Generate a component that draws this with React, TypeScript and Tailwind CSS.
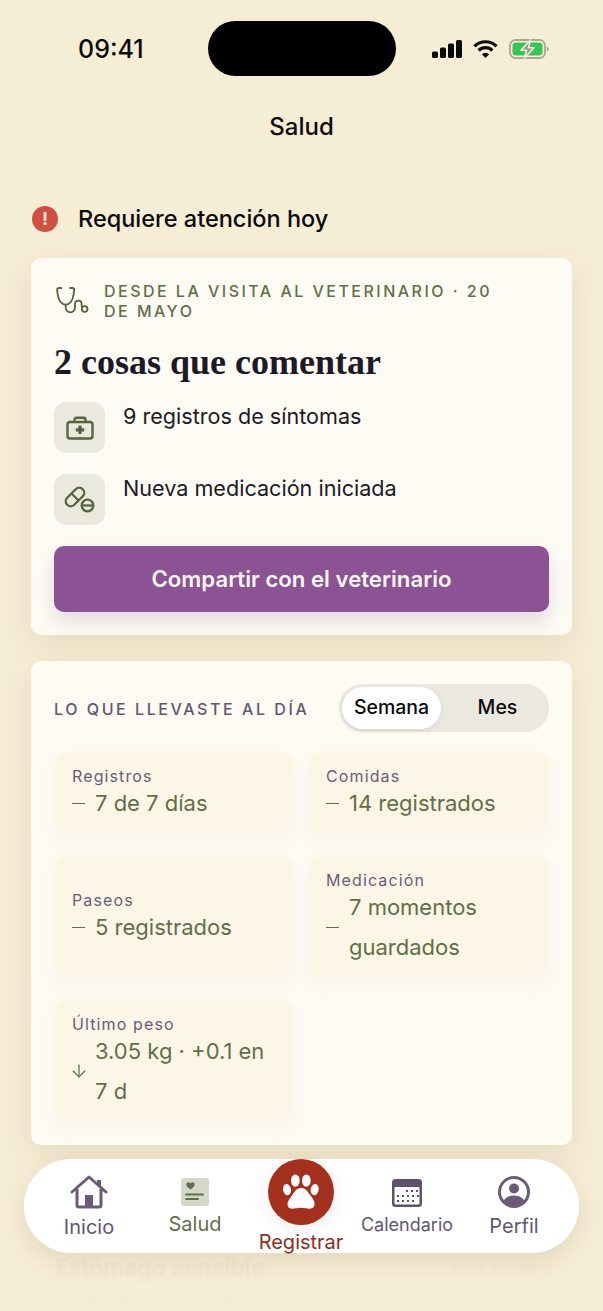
import { ArrowDown } from "lucide-react";

const sans = "font-['Inter','Liberation_Sans',sans-serif]";

function Signal() {
  return (
    <svg width="30" height="18" viewBox="0 0 30 18" fill="#0b0b0b">
      <rect x="0" y="11.500" width="6" height="6.500" rx="1.500" />
      <rect x="8" y="7.500" width="6" height="10.500" rx="1.500" />
      <rect x="16" y="3.500" width="6" height="14.500" rx="1.500" />
      <rect x="24" y="0" width="6" height="18" rx="1.500" />
    </svg>
  );
}

function Wifi() {
  return (
    <svg width="25" height="18" viewBox="0 0 25 18" fill="none" stroke="#0b0b0b" strokeWidth="3.200">
      <path d="M1.500 6.300a15.600 15.600 0 0 1 22 0" />
      <path d="M5.600 10.500a9.800 9.800 0 0 1 13.800 0" />
      <path d="M12.500 18l-3.700-3.800a5.200 5.200 0 0 1 7.400 0z" fill="#0b0b0b" stroke="none" />
    </svg>
  );
}

function Battery() {
  return (
    <svg width="40" height="20" viewBox="0 0 40 20">
      <rect x="1" y="1" width="35" height="18" rx="5.500" fill="#f7f1dc" stroke="#a9a98e" strokeWidth="1.800" />
      <rect x="3.500" y="3.500" width="30" height="13" rx="3.500" fill="#33c758" />
      <path d="M37.800 7.500v5c1.400-.4 2-1.300 2-2.500s-.6-2.100-2-2.500z" fill="#a9a98e" />
      <path d="M21.500 1L12 11.300h5.500L15.500 19l9.500-10.300h-5.500z" fill="#9a9a86" stroke="#f2ecd6" strokeWidth="1.600" strokeLinejoin="round" />
    </svg>
  );
}

function StethoIcon() {
  return (
    <svg className="mt-1 shrink-0" width="36" height="30" viewBox="12 15 108 90" fill="none" stroke="#57643f" strokeWidth="5.500" strokeLinecap="round">
      <path d="M34 24h-7c-4 0-6 3-5.500 7l2 14c2 17 12 29 23.500 29s21.500-12 23.500-29l2-14c.5-4-1.500-7-5.500-7h-7" />
      <path d="M47 74v8c0 9 6 15 14 15s14-6 14-15V72c0-6 4-10 10-10s10 4 10 10v6" />
      <circle cx="104" cy="87" r="8.500" />
    </svg>
  );
}

function MedKit() {
  return (
    <svg width="28" height="24" viewBox="0 0 28 24" fill="none" stroke="#57643f" strokeWidth="2.400">
      <rect x="1.500" y="6" width="25" height="16.500" rx="2.500" />
      <path d="M8.500 6V3.500A1.800 1.800 0 0 1 10.300 1.700h7.400A1.800 1.800 0 0 1 19.500 3.500V6" />
      <path d="M14 9.500v8.500M9.800 13.800h8.400" strokeWidth="3.200" />
    </svg>
  );
}

function PillMinus() {
  return (
    <svg width="31" height="27" viewBox="0 0 31 27" fill="none" stroke="#57643f" strokeWidth="2.300">
      <rect x="-11" y="-5" width="22" height="10" rx="5" transform="translate(11 11) rotate(-45)" />
      <path d="M7.500 7.500l7 7" />
      <circle cx="23.500" cy="19.500" r="5.800" />
      <path d="M18.500 19.500h10" />
    </svg>
  );
}

function HomeIcon() {
  return (
    <svg width="38" height="34" viewBox="0 0 38 34" fill="none">
      <path d="M2 17L19 2l17 15" stroke="#6b5a78" strokeWidth="3" strokeLinecap="round" strokeLinejoin="round" />
      <path d="M29 5v6" stroke="#6b5a78" strokeWidth="4" />
      <path d="M7 14v16a2 2 0 0 0 2 2h20a2 2 0 0 0 2-2V14" stroke="#6b5a78" strokeWidth="3" />
      <rect x="15" y="20" width="8" height="12" fill="#6b5a78" />
    </svg>
  );
}

function HealthIcon() {
  return (
    <svg width="28" height="28" viewBox="0 0 28 28">
      <rect width="28" height="28" rx="3" fill="#d3d8c8" />
      <path d="M9 12.500C6 10.300 4.800 9 4.800 7.300 4.800 5.300 7.600 4.500 9 6.600 10.400 4.500 13.200 5.300 13.200 7.300 13.200 9 12 10.300 9 12.500z" fill="#5f7048" transform="translate(.5 -1)" />
      <path d="M5 16.500h17M5 21h12" stroke="#5f7048" strokeWidth="1.800" strokeLinecap="round" />
    </svg>
  );
}

function Paw() {
  return (
    <svg width="40" height="38" viewBox="49 52 120 114" fill="#fff">
      <ellipse cx="67" cy="102" rx="12" ry="17" transform="rotate(-10 67 102)" />
      <ellipse cx="92" cy="75" rx="13" ry="18.500" />
      <ellipse cx="125" cy="75" rx="13" ry="18.500" />
      <ellipse cx="150" cy="102" rx="12" ry="17" transform="rotate(10 150 102)" />
      <path d="M109 97C124 97 132 112 141 124C149 134 151 142 149 150C146 160 134 160 124 158C114 156 104 156 94 158C84 160 71 160 69 150C67 142 71 133 79 124C87 112 94 97 109 97z" />
    </svg>
  );
}

function CalendarIcon() {
  const dots = [
    [15, 12], [20, 12], [25, 12],
    [6, 17], [11, 17], [16, 17], [21, 17], [26, 17],
    [6, 22], [11, 22], [16, 22], [21, 22],
  ];
  return (
    <svg width="30" height="28" viewBox="0 0 30 28">
      <rect x="0" y="0" width="30" height="28" rx="3.500" fill="#5f5169" />
      <rect x="2.500" y="8" width="25" height="17.500" rx="1" fill="#fff" />
      {dots.map(([x, y]) => (
        <rect key={`${x}-${y}`} x={x - 1} y={y - 1} width="2" height="2" fill="#5f5169" />
      ))}
    </svg>
  );
}

function ProfileIcon() {
  return (
    <svg width="32" height="32" viewBox="0 0 32 32">
      <defs>
        <clipPath id="profile-clip">
          <circle cx="16" cy="16" r="13.500" />
        </clipPath>
      </defs>
      <circle cx="16" cy="16" r="14.500" fill="none" stroke="#6b5a78" strokeWidth="3" />
      <circle cx="16" cy="12.500" r="5" fill="#6b5a78" />
      <ellipse cx="16" cy="27" rx="11" ry="7.500" fill="#6b5a78" clipPath="url(#profile-clip)" />
    </svg>
  );
}

function Row({ icon, text }: { icon: React.ReactNode; text: string }) {
  return (
    <div className="flex gap-[18px]">
      <div className="flex h-[51px] w-[51px] shrink-0 items-center justify-center rounded-xl bg-[#e9e9dd]">{icon}</div>
      <p className="text-[21.600px] leading-[28px] text-[#1d1a26]">{text}</p>
    </div>
  );
}

function Tile({ label, mark, value }: { label: string; mark?: React.ReactNode; value: string }) {
  return (
    <div className="flex flex-col justify-center rounded-xl bg-[#fcf6e7] pb-2.5 pl-[17px] pr-4 pt-3.5 shadow-[0_8px_20px_rgba(120,100,60,0.05)]">
      <p className="h-5 text-[16px] leading-5 tracking-[0.07em] text-[#6a5d78]">{label}</p>
      <div className="-mt-[3px] flex items-center gap-2 text-[22px] leading-10 text-[#5f7048]">
        <span className="flex w-[15px] shrink-0 items-center justify-start">
          {mark ?? <span className="h-px w-[13px] bg-[#5f7048]" />}
        </span>
        <span>{value}</span>
      </div>
    </div>
  );
}

function NavItem({ icon, label, textClass }: { icon: React.ReactNode; label: string; textClass: string }) {
  return (
    <div className="flex w-[106px] flex-col items-center">
      <div className="flex h-[36px] items-center justify-center">{icon}</div>
      <span className={textClass}>{label}</span>
    </div>
  );
}

export default function App() {
  return (
    <div className={`relative h-[1311px] w-[603px] overflow-hidden bg-[#f6edd5] ${sans}`}>
      <div className="flex h-[76px] items-center pl-[78px] pt-[21px]">
        <span className="h-[55px] w-[130px] text-[25px] font-medium leading-[57px] text-[#0b0b0b]">09:41</span>
        <div className="h-[55px] w-[188px] rounded-full bg-black" />
        <div className="ml-[36px] flex items-center gap-[11px]">
          <Signal />
          <Wifi />
          <Battery />
        </div>
      </div>

      <h1 className="mt-[33px] text-center text-[24px] font-medium leading-[36px] text-[#0b0b0b]">Salud</h1>

      <div className="mt-[56px] flex items-center gap-5 pl-8">
        <div className="flex h-[26px] w-[26px] items-center justify-center rounded-full bg-[#cf5040] text-[18px] font-bold leading-none text-[#fbeee0]">!</div>
        <h2 className="text-[23.500px] font-medium leading-[36px] text-[#0b0b0b]">Requiere atención hoy</h2>
      </div>

      <section className="ml-[31px] mt-[21px] w-[541px] rounded-[10px] bg-[#fefbf5] px-[23px] pb-[23px] pt-[23px] shadow-[0_10px_30px_rgba(130,100,50,0.12)]">
        <div className="flex items-start gap-3.5 pr-10">
          <StethoIcon />
          <p className="text-[16px] font-medium leading-5 tracking-[0.155em] text-[#5f7048]">DESDE LA VISITA AL VETERINARIO · 20 DE MAYO</p>
        </div>
        <h3 className="mt-[19px] font-['Liberation_Serif',serif] text-[36px] font-bold leading-[44px] text-[#1d1a26]">2 cosas que comentar</h3>
        <div className="mt-[18px] flex flex-col gap-[21px]">
          <Row icon={<MedKit />} text="9 registros de síntomas" />
          <Row icon={<PillMinus />} text="Nueva medicación iniciada" />
        </div>
        <button className="mt-[21px] flex h-[66px] w-full items-center justify-center rounded-[10px] bg-[#8b5294] text-[22.200px] font-semibold text-[#fdf8f2] shadow-[0_10px_20px_rgba(110,70,120,0.18)]">
          Compartir con el veterinario
        </button>
      </section>

      <section className="ml-[31px] mt-[26px] w-[541px] rounded-[10px] bg-[#fefbf3] px-[23px] pb-6 pt-[23px] shadow-[0_10px_30px_rgba(130,100,50,0.12)]">
        <div className="flex items-center justify-between">
          <h3 className="pt-0.5 text-[16px] font-medium tracking-[0.16em] text-[#635670]">LO QUE LLEVASTE AL DÍA</h3>
          <div className="flex h-12 w-[210px] items-center rounded-full bg-[#ebe8df] p-[3px] text-[19.500px] font-medium text-[#0b0b0b]">
            <div className="flex h-[42px] w-[99px] items-center justify-center rounded-full bg-white shadow-[0_2px_6px_rgba(0,0,0,0.08)]">Semana</div>
            <div className="flex flex-1 items-center justify-center pl-[8px]">Mes</div>
          </div>
        </div>
        <div className="ml-px mt-5 grid grid-cols-[237px_239px] gap-x-[17px] gap-y-[23px]">
          <Tile label="Registros" value="7 de 7 días" />
          <Tile label="Comidas" value="14 registrados" />
          <Tile label="Paseos" value="5 registrados" />
          <Tile label="Medicación" value="7 momentos guardados" />
          <Tile label="Último peso" mark={<ArrowDown size={20} strokeWidth={1.500} className="-ml-[3px] shrink-0" />} value="3.05 kg · +0.1 en 7 d" />
        </div>
      </section>

      <section className="ml-[55px] mr-[50px] mt-[109px] blur-[1px]">
        <div className="flex items-center justify-between">
          <p className="text-[23px] font-semibold leading-7 text-[#efe5cc]">Estómago sensible</p>
          <p className="text-[17px] leading-7 text-[#f1e8cf]">Esta semana</p>
        </div>
        <p className="mt-[2px] text-[18px] leading-6 text-[#f3ead2]">desde la última visita</p>
      </section>

      <nav className="absolute left-6 top-[1159px] h-[94px] w-[555px] rounded-[47px] bg-white shadow-[0_8px_24px_rgba(120,95,50,0.14)]">
        <div className="flex items-start pl-[12px] pt-[15px]">
          <NavItem icon={<HomeIcon />} label="Inicio" textClass="mt-[3px] text-[20px] leading-7 text-[#635670]" />
          <NavItem icon={<HealthIcon />} label="Salud" textClass="text-[20px] leading-7 text-[#5f7048]" />
          <div className="-mt-[15px] flex w-[106px] flex-col items-center">
            <div className="flex h-[66px] w-[66px] items-center justify-center rounded-full bg-[#a3301c] shadow-[0_4px_20px_rgba(0,0,0,0.08)]">
              <Paw />
            </div>
            <span className="mt-[3px] text-[20px] leading-7 text-[#8f2f1d]">Registrar</span>
          </div>
          <NavItem icon={<div className="pt-0.5"><CalendarIcon /></div>} label="Calendario" textClass="mt-px text-[18px] leading-7 text-[#635670]" />
          <NavItem icon={<div className="pl-0.5"><ProfileIcon /></div>} label="Perfil" textClass="ml-0.5 mt-0.5 text-[20px] leading-7 text-[#635670]" />
        </div>
      </nav>
    </div>
  );
}
